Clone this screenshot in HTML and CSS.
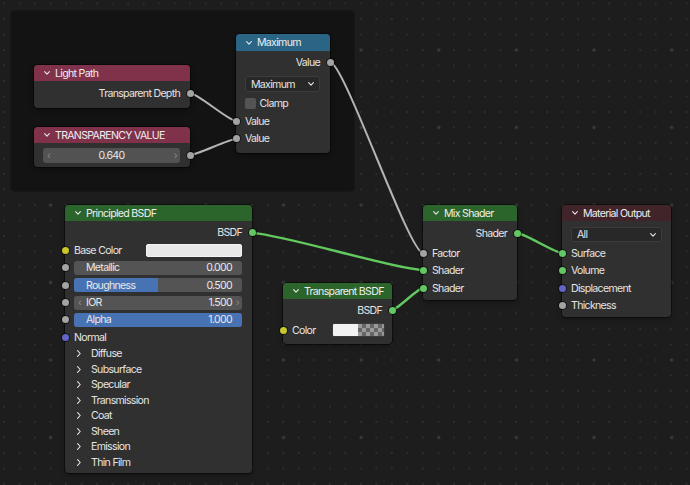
FILE: index.html
```html
<!DOCTYPE html>
<html lang="en">
<head>
<meta charset="utf-8">
<title>Shader Editor</title>
<link rel="stylesheet" href="styles.css">
</head>
<body>
<div class="editor">
  <div class="frame"></div>

  <svg class="wires" viewBox="0 0 690 485" width="690" height="485">
    <g fill="none" stroke-linecap="round">
      <path class="w-grey" d="M190 93 C197 93 229 121 236 121"/>
      <path class="w-grey" d="M190 155 C197 155 229 139 236 139"/>
      <path class="w-grey" d="M330 62 C344 62 409 253 423 253"/>
      <path class="w-green" d="M252 233 C278 233 397 270 423 270"/>
      <path class="w-green" d="M392 310 C397 310 418 288 423 288"/>
      <path class="w-green" d="M517 233 C524 233 555 253 562 253"/>
    </g>
  </svg>

  <!-- Light Path -->
  <div class="node n-lightpath">
    <div class="hdr input"><svg class="chev" viewBox="0 0 6 4"><path d="M0.6 0.6L3 3.1 5.4 0.6"/></svg>Light Path</div>
    <div class="body lp-body">
      <div class="row out">Transparent Depth<span class="sock g"></span></div>
    </div>
  </div>

  <!-- Transparency value -->
  <div class="node n-transval">
    <div class="hdr input"><svg class="chev" viewBox="0 0 6 4"><path d="M0.6 0.6L3 3.1 5.4 0.6"/></svg>TRANSPARENCY VALUE</div>
    <div class="body tv-body">
      <div class="row out tv-row">
        <div class="field center"><span class="arr l">‹</span><span class="val">0.640</span><span class="arr r">›</span></div>
        <span class="sock g"></span>
      </div>
    </div>
  </div>

  <!-- Maximum -->
  <div class="node n-max">
    <div class="hdr conv tall"><svg class="chev" viewBox="0 0 6 4"><path d="M0.6 0.6L3 3.1 5.4 0.6"/></svg>Maximum</div>
    <div class="body max-body">
      <div class="row out r17">Value<span class="sock g"></span></div>
      <div class="dd max-dd"><span>Maximum</span><svg class="ddchev" viewBox="0 0 6 4"><path d="M0.6 0.6L3 3.1 5.4 0.6"/></svg></div>
      <div class="row in clamp-row"><span class="check"></span>Clamp</div>
      <div class="row in">Value<span class="sock g"></span></div>
      <div class="row in">Value<span class="sock g"></span></div>
    </div>
  </div>

  <!-- Principled BSDF -->
  <div class="node n-principled">
    <div class="hdr shader"><svg class="chev" viewBox="0 0 6 4"><path d="M0.6 0.6L3 3.1 5.4 0.6"/></svg>Principled BSDF</div>
    <div class="body pr-body">
      <div class="row out pr">BSDF<span class="sock s"></span></div>
      <div class="row in pr">Base Color<span class="swatch"></span><span class="sock y"></span></div>
      <div class="row in pr f"><div class="field"><span class="lbl">Metallic</span><span class="val">0.000</span></div><span class="sock g"></span></div>
      <div class="row in pr f"><div class="field"><span class="fill" style="width:50%"></span><span class="lbl">Roughness</span><span class="val">0.500</span></div><span class="sock g"></span></div>
      <div class="row in pr f"><div class="field"><span class="arr l">‹</span><span class="lbl">IOR</span><span class="val">1.500</span><span class="arr r">›</span></div><span class="sock g"></span></div>
      <div class="row in pr f"><div class="field"><span class="fill" style="width:100%"></span><span class="lbl">Alpha</span><span class="val">1.000</span></div><span class="sock g"></span></div>
      <div class="row in pr">Normal<span class="sock p"></span></div>
      <div class="panel"><svg class="pchev" viewBox="0 0 4 7"><path d="M0.6 0.6L3.2 3.5 0.6 6.4"/></svg>Diffuse</div>
      <div class="panel"><svg class="pchev" viewBox="0 0 4 7"><path d="M0.6 0.6L3.2 3.5 0.6 6.4"/></svg>Subsurface</div>
      <div class="panel"><svg class="pchev" viewBox="0 0 4 7"><path d="M0.6 0.6L3.2 3.5 0.6 6.4"/></svg>Specular</div>
      <div class="panel"><svg class="pchev" viewBox="0 0 4 7"><path d="M0.6 0.6L3.2 3.5 0.6 6.4"/></svg>Transmission</div>
      <div class="panel"><svg class="pchev" viewBox="0 0 4 7"><path d="M0.6 0.6L3.2 3.5 0.6 6.4"/></svg>Coat</div>
      <div class="panel"><svg class="pchev" viewBox="0 0 4 7"><path d="M0.6 0.6L3.2 3.5 0.6 6.4"/></svg>Sheen</div>
      <div class="panel"><svg class="pchev" viewBox="0 0 4 7"><path d="M0.6 0.6L3.2 3.5 0.6 6.4"/></svg>Emission</div>
      <div class="panel"><svg class="pchev" viewBox="0 0 4 7"><path d="M0.6 0.6L3.2 3.5 0.6 6.4"/></svg>Thin Film</div>
    </div>
  </div>

  <!-- Transparent BSDF -->
  <div class="node n-transparent">
    <div class="hdr shader"><svg class="chev" viewBox="0 0 6 4"><path d="M0.6 0.6L3 3.1 5.4 0.6"/></svg>Transparent BSDF</div>
    <div class="body tb-body">
      <div class="row out r17">BSDF<span class="sock s"></span></div>
      <div class="row in r17 tb-color">Color<span class="colorbox"><span class="solid"></span><span class="checker"></span></span><span class="sock y"></span></div>
    </div>
  </div>

  <!-- Mix Shader -->
  <div class="node n-mix">
    <div class="hdr shader"><svg class="chev" viewBox="0 0 6 4"><path d="M0.6 0.6L3 3.1 5.4 0.6"/></svg>Mix Shader</div>
    <div class="body mix-body">
      <div class="row out r17">Shader<span class="sock s"></span></div>
      <div class="row in gap-top">Factor<span class="sock g"></span></div>
      <div class="row in">Shader<span class="sock s"></span></div>
      <div class="row in">Shader<span class="sock s"></span></div>
    </div>
  </div>

  <!-- Material Output -->
  <div class="node n-output">
    <div class="hdr output"><svg class="chev" viewBox="0 0 6 4"><path d="M0.6 0.6L3 3.1 5.4 0.6"/></svg>Material Output</div>
    <div class="body out-body">
      <div class="dd out-dd"><span>All</span><svg class="ddchev" viewBox="0 0 6 4"><path d="M0.6 0.6L3 3.1 5.4 0.6"/></svg></div>
      <div class="row in">Surface<span class="sock s"></span></div>
      <div class="row in">Volume<span class="sock s"></span></div>
      <div class="row in">Displacement<span class="sock p"></span></div>
      <div class="row in">Thickness<span class="sock g"></span></div>
    </div>
  </div>
</div>
</body>
</html>
```

FILE: styles.css
```css
* { box-sizing: border-box; }

body {
  margin: 0;
  background: #1d1d1d;
  font-family: Inter, "DejaVu Sans", sans-serif;
  font-size: 10.6px;
  letter-spacing: -0.7px;
  color: #e4e4e4;
}

/* node editor canvas with its dot grid (minor dots + every fifth a bigger one) */
.editor {
  position: relative;
  width: 690px;
  height: 485px;
  overflow: hidden;
  background-color: #1d1d1d;
  background-image:
    radial-gradient(circle, #3a3a3a 0, #3a3a3a 1.3px, rgba(58,58,58,0) 1.9px),
    radial-gradient(circle, #2d2d2d 0, #2d2d2d 0.8px, rgba(45,45,45,0) 1.3px);
  background-size: 77.65px 77.5px, 15.53px 15.5px;
  background-position: 11.8px 11.25px, -3.77px -4.25px;
}

.frame {
  position: absolute;
  left: 11px;
  top: 11px;
  width: 343px;
  height: 180px;
  background: #131313;
  border-radius: 4px;
  box-shadow: 0 0 0 1px #171717;
}

.wires {
  position: absolute;
  left: 0;
  top: 0;
}
.w-grey { stroke: #b4b4b4; stroke-width: 2; }
.w-green { stroke: #62c95f; stroke-width: 2.4; }

/* ---------- nodes ---------- */
.node {
  position: absolute;
  background: #303030;
  border-radius: 4px;
  box-shadow: 0 0 0 1px rgba(0,0,0,0.45), 0 2px 5px rgba(0,0,0,0.35);
}

.hdr {
  height: 16px;
  display: flex;
  align-items: center;
  gap: 5px;
  padding-left: 10px;
  border-radius: 4px 4px 0 0;
  color: #eeeeee;
  white-space: nowrap;
}
.hdr.tall { height: 17px; }
.hdr.input { background: #80324b; }
.hdr.conv { background: #2b6586; }
.hdr.shader { background: #2c652c; }
.hdr.output { background: #41232a; }

.chev {
  width: 6px;
  height: 4px;
  flex: none;
}
.chev path, .ddchev path, .pchev path {
  fill: none;
  stroke: #e6e6e6;
  stroke-width: 1.1;
  stroke-linecap: round;
  stroke-linejoin: round;
}

.row {
  position: relative;
  display: flex;
  align-items: center;
  height: 17.5px;
  padding: 0 10px 0 9px;
  white-space: nowrap;
}
.row.out { justify-content: flex-end; padding-right: 10px; }
.r17 { height: 17px; }

.sock {
  position: absolute;
  top: 50%;
  width: 7px;
  height: 7px;
  margin-top: -3.5px;
  border-radius: 50%;
  box-shadow: 0 0 0 1px rgba(0,0,0,0.55);
}
.row.out .sock { right: -3.5px; }
.row.in .sock { left: -3.5px; }
.sock.g { background: #a3a3a3; }
.sock.y { background: #c8c82a; }
.sock.p { background: #6464c8; }
.sock.s { background: #63c763; }

/* number fields and sliders */
.field {
  position: relative;
  flex: 1;
  height: 14px;
  background: #545454;
  border-radius: 3px;
  display: flex;
  align-items: center;
  padding: 0 10px 0 12px;
  overflow: hidden;
  color: #e8e8e8;
}
.field .lbl { position: relative; flex: 1; }
.field .val { position: relative; }
.field .fill {
  position: absolute;
  left: 0;
  top: 0;
  bottom: 0;
  background: #4772b3;
}
.field .arr {
  position: absolute;
  top: 0;
  line-height: 13px;
  color: #8a8a8a;
  font-size: 10px;
}
.field .arr.l { left: 4px; }
.field .arr.r { right: 3px; }
.field.center {
  justify-content: center;
  padding: 0;
  height: 15px;
  background: #525252;
}
.field.center .arr { line-height: 14px; }

/* Light Path */
.n-lightpath { left: 34px; top: 65px; width: 156px; }
.lp-body { padding: 3.5px 0 5.5px; }

/* Transparency value */
.n-transval { left: 34px; top: 127px; width: 156px; }
.tv-body { padding: 4.5px 0 4px; }
.tv-row { height: 15.5px; padding-left: 9px; }

/* Maximum */
.n-max { left: 236px; top: 34px; width: 94px; }
.max-body { padding: 2.5px 0 5.75px; }
.dd {
  display: flex;
  align-items: center;
  justify-content: space-between;
  background: #282828;
  border: 1px solid #3c3c3c;
  border-radius: 3px;
  color: #e4e4e4;
}
.ddchev { width: 6px; height: 4px; }
.max-dd {
  height: 16px;
  margin: 5.5px 10px 0 9px;
  padding: 0 5px 0 5px;
}
.clamp-row { margin-top: 2.75px; gap: 3.5px; }
.check {
  width: 11px;
  height: 11px;
  background: #545454;
  border-radius: 2px;
}

/* Principled BSDF */
.n-principled { left: 65px; top: 205px; width: 187px; }
.pr-body { padding: 3.25px 0 3px; }
.row.pr { height: 17.4px; }
.row.f { padding-left: 9px; }
.swatch {
  margin-left: auto;
  width: 96px;
  height: 13.5px;
  background: #e8e8e8;
  border: 1px solid #f4f4f4;
  border-radius: 2px;
}
.panel {
  display: flex;
  align-items: center;
  height: 15.5px;
  padding-left: 12px;
  gap: 10px;
  white-space: nowrap;
}
.pchev { width: 4px; height: 7px; flex: none; }

/* Transparent BSDF */
.n-transparent { left: 283px; top: 283px; width: 109px; }
.tb-body { padding: 2.5px 0 5.5px; }
.tb-color { margin-top: 3px; }
.colorbox {
  margin-left: auto;
  margin-right: -3px;
  width: 53px;
  height: 14px;
  display: flex;
  border-radius: 2px;
  overflow: hidden;
  border: 1px solid #3a3a3a;
}
.colorbox .solid { width: 25px; background: #f2f2f2; }
.colorbox .checker {
  flex: 1;
  background-color: #9a9a9a;
  background-image:
    linear-gradient(45deg, #666 25%, transparent 25%, transparent 75%, #666 75%),
    linear-gradient(45deg, #666 25%, transparent 25%, transparent 75%, #666 75%);
  background-size: 8px 8px;
  background-position: 0 0, 4px 4px;
}

/* Mix Shader */
.n-mix { left: 423px; top: 205px; width: 94px; }
.mix-body { padding: 3.5px 0 3.25px; }
.gap-top { margin-top: 2.75px; }

/* Material Output */
.n-output { left: 562px; top: 205px; width: 109px; }
.out-body { padding: 6px 0 2.75px; }
.out-dd {
  height: 15px;
  margin: 0 9px 2.25px 9px;
  padding: 0 5px 0 5px;
}
```
